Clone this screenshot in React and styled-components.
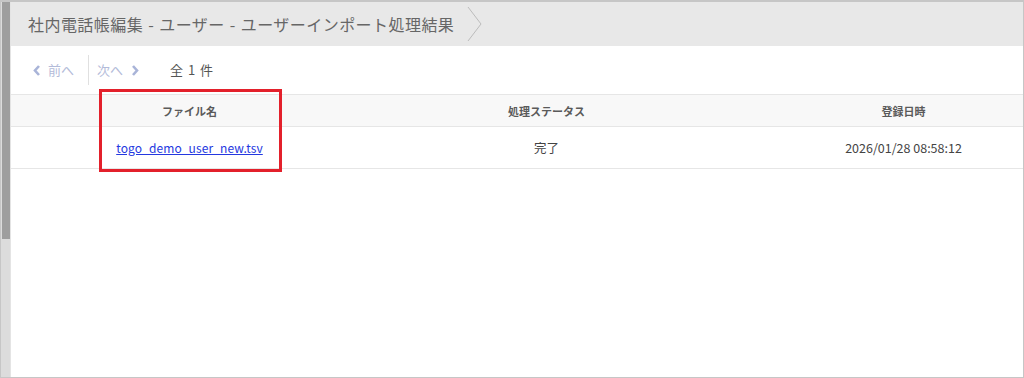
import React from "react";
import styled, { createGlobalStyle } from "styled-components";

const GlobalStyle = createGlobalStyle`
  html, body {
    margin: 0;
    padding: 0;
    background: #fff;
  }
  body {
    font-family: "Noto Sans CJK JP", "Noto Sans", sans-serif;
    color: #555;
  }
  * {
    box-sizing: border-box;
  }
`;

const Frame = styled.div`
  position: relative;
  width: 1024px;
  height: 378px;
  display: flex;
  border: 1px solid #c6c6c6;
  border-top-width: 2px;
  overflow: hidden;
  background: #fff;
`;

const ScrollTrack = styled.div`
  width: 10px;
  flex-shrink: 0;
  background: #dcdcdc;
  border-right: 1px solid #e4e4e4;
`;

const ScrollThumb = styled.div`
  width: 8px;
  margin-left: 1px;
  height: 237px;
  background: #9e9e9e;
`;

const Main = styled.div`
  flex: 1;
  min-width: 0;
  overflow: hidden;
  display: flex;
  flex-direction: column;
`;

const Header = styled.div`
  height: 44px;
  background: #e8e8e8;
  display: flex;
  align-items: center;
  padding-left: 17px;
  gap: 13px;
`;

const Title = styled.h1`
  margin: 0;
  font-size: 16px;
  font-weight: normal;
  color: #666;
  line-height: 20px;
  letter-spacing: 0.45px;
  word-spacing: 1px;
  white-space: nowrap;
`;

const Toolbar = styled.div`
  height: 48px;
  display: flex;
  align-items: center;
  padding-left: 22px;
`;

const PagerButton = styled.span`
  display: flex;
  align-items: center;
  gap: ${(p) => p.$gap}px;
  font-size: 13px;
  line-height: 18px;
  color: #b3bbd9;
  padding-right: ${(p) => p.$right || 0}px;
  padding-left: ${(p) => p.$left || 0}px;
`;

const Separator = styled.span`
  width: 1px;
  height: 30px;
  background: #e0e0e0;
`;

const Count = styled.span`
  margin-left: 31px;
  font-size: 13px;
  line-height: 18px;
  color: #555;
  word-spacing: 2px;
`;

const Table = styled.div`
  display: grid;
  grid-template-columns: repeat(3, 357px);
  width: 1071px;
  border-top: 1px solid #e6e6e6;
`;

const HeadCell = styled.div`
  height: 32px;
  display: flex;
  align-items: center;
  justify-content: center;
  background: #f8f8f8;
  border-bottom: 1px solid #e6e6e6;
  font-size: 11px;
  font-weight: bold;
  color: #5a5a5a;
`;

const Cell = styled.div`
  height: 42px;
  display: flex;
  align-items: center;
  justify-content: center;
  border-bottom: 1px solid #e6e6e6;
  font-size: 12.5px;
  color: #444;
`;

const FileLink = styled.a`
  color: #2438e0;
  text-decoration: underline;
  font-size: 12px;
  letter-spacing: 0.1px;
`;

const Highlight = styled.div`
  position: absolute;
  left: 98px;
  top: 87px;
  width: 183px;
  height: 83px;
  border: 3px solid #e3202b;
  pointer-events: none;
`;

function Chevron({ dir }) {
  const pts = dir === "left" ? "6,1 2,5.5 6,10" : "2,1 6,5.5 2,10";
  return (
    <svg width="8" height="11" viewBox="0 0 8 11">
      <polyline points={pts} fill="none" stroke="#a9b4d8" strokeWidth="2.6" />
    </svg>
  );
}

export default function App() {
  return (
    <>
      <GlobalStyle />
      <Frame>
        <ScrollTrack>
          <ScrollThumb />
        </ScrollTrack>
        <Main>
          <Header>
            <Title>社内電話帳編集 - ユーザー - ユーザーインポート処理結果</Title>
            <svg width="15" height="36" viewBox="0 0 15 36">
              <polyline points="1,1 14,18 1,35" fill="none" stroke="#bcbcbc" strokeWidth="1" />
            </svg>
          </Header>
          <Toolbar>
            <PagerButton $gap={7} $right={14}>
              <Chevron dir="left" />
              前へ
            </PagerButton>
            <Separator />
            <PagerButton $gap={8} $left={8}>
              次へ
              <Chevron dir="right" />
            </PagerButton>
            <Count>全 1 件</Count>
          </Toolbar>
          <Table>
            <HeadCell>ファイル名</HeadCell>
            <HeadCell>処理ステータス</HeadCell>
            <HeadCell>登録日時</HeadCell>
            <Cell>
              <FileLink href="#">togo_demo_user_new.tsv</FileLink>
            </Cell>
            <Cell>完了</Cell>
            <Cell>2026/01/28 08:58:12</Cell>
          </Table>
        </Main>
        <Highlight />
      </Frame>
    </>
  );
}
